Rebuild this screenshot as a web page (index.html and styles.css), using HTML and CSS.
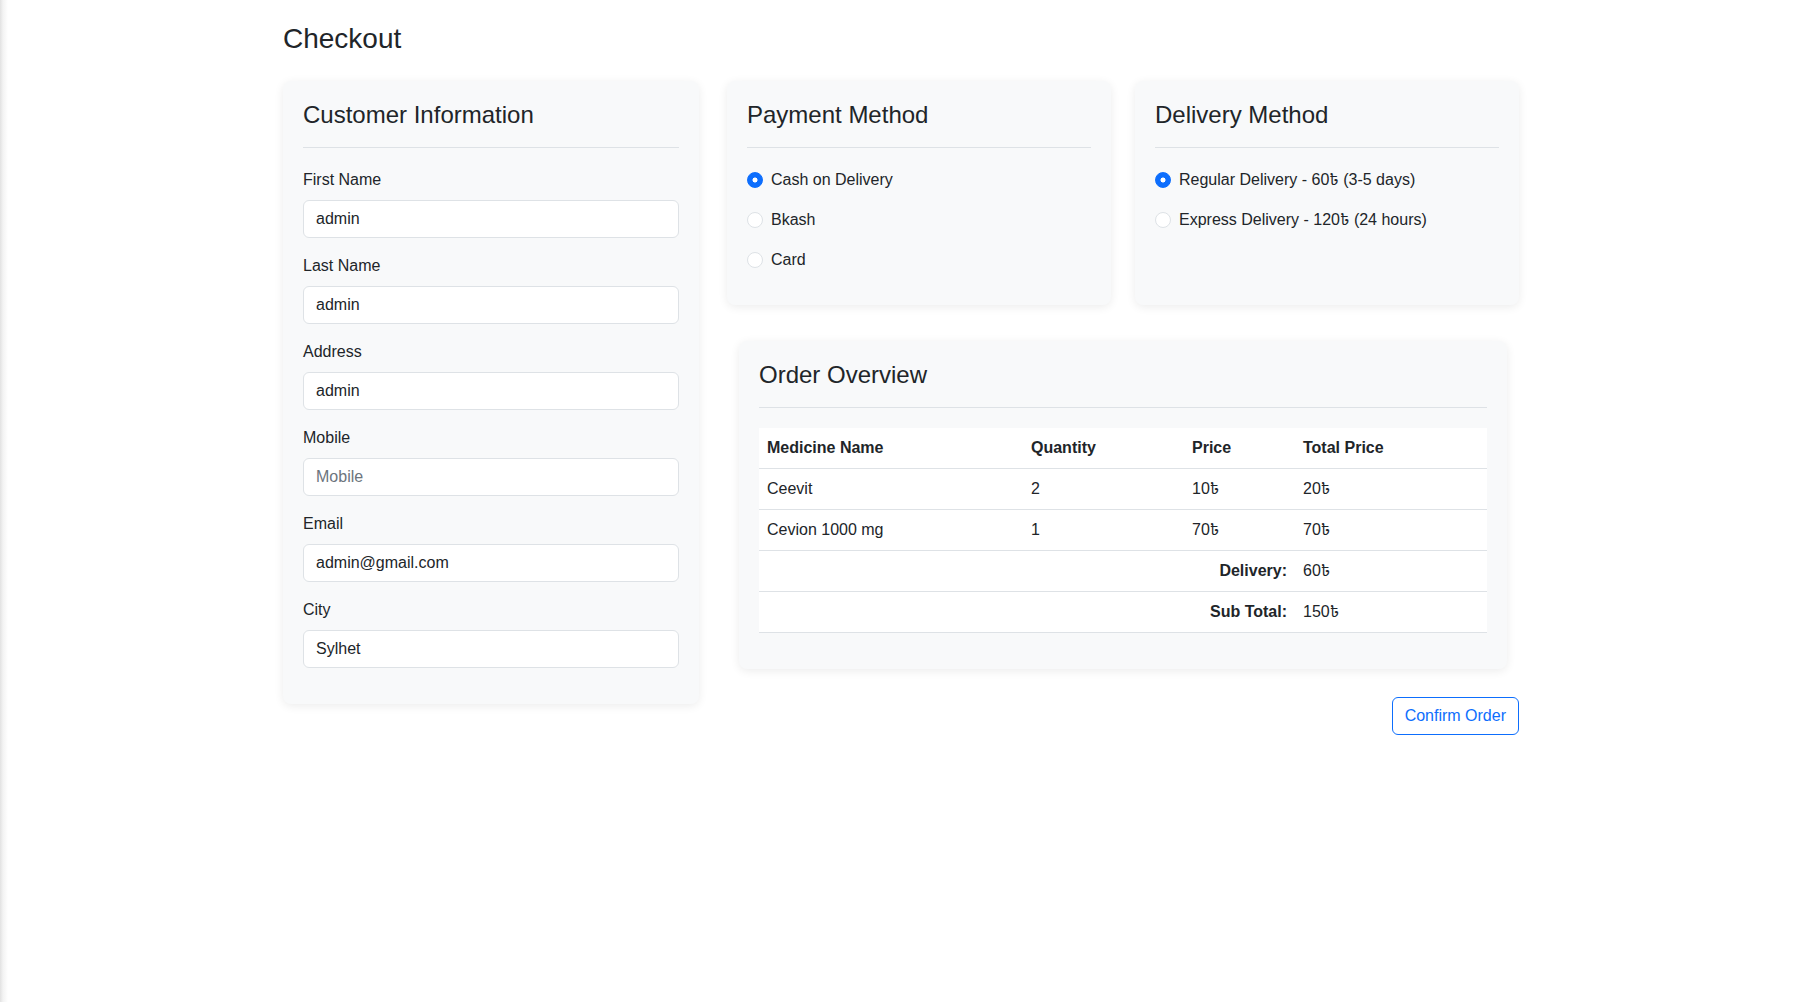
FILE: index.html
```html
<!DOCTYPE html>
<html lang="en">
<head>
<meta charset="utf-8">
<title>Checkout</title>
<link rel="stylesheet" href="styles.css">
</head>
<body>
<div class="page">
  <h3 class="page-title">Checkout</h3>
  <div class="layout">
    <div class="col-customer">
      <div class="card">
        <h4 class="card-title">Customer Information</h4>
        <hr class="divider">
        <div class="field">
          <label class="field-label" for="fn">First Name</label>
          <input class="field-input" id="fn" type="text" value="admin">
        </div>
        <div class="field">
          <label class="field-label" for="ln">Last Name</label>
          <input class="field-input" id="ln" type="text" value="admin">
        </div>
        <div class="field">
          <label class="field-label" for="ad">Address</label>
          <input class="field-input" id="ad" type="text" value="admin">
        </div>
        <div class="field">
          <label class="field-label" for="mo">Mobile</label>
          <input class="field-input" id="mo" type="text" placeholder="Mobile">
        </div>
        <div class="field">
          <label class="field-label" for="em">Email</label>
          <input class="field-input" id="em" type="text" value="admin@gmail.com">
        </div>
        <div class="field">
          <label class="field-label" for="ci">City</label>
          <input class="field-input" id="ci" type="text" value="Sylhet">
        </div>
      </div>
    </div>
    <div class="col-right">
      <div class="methods">
        <div class="card">
          <h4 class="card-title">Payment Method</h4>
          <hr class="divider">
          <div class="options">
            <label class="option"><input class="radio" type="radio" name="pay" checked><span>Cash on Delivery</span></label>
            <label class="option"><input class="radio" type="radio" name="pay"><span>Bkash</span></label>
            <label class="option"><input class="radio" type="radio" name="pay"><span>Card</span></label>
          </div>
        </div>
        <div class="card">
          <h4 class="card-title">Delivery Method</h4>
          <hr class="divider">
          <div class="options">
            <label class="option"><input class="radio" type="radio" name="del" checked><span>Regular Delivery - 60<span class="tk">৳</span> (3-5 days)</span></label>
            <label class="option"><input class="radio" type="radio" name="del"><span>Express Delivery - 120<span class="tk">৳</span> (24 hours)</span></label>
          </div>
        </div>
      </div>
      <div class="card order-card">
        <h4 class="card-title">Order Overview</h4>
        <hr class="divider">
        <table class="order-table">
          <colgroup>
            <col class="c1"><col class="c2"><col class="c3"><col class="c4">
          </colgroup>
          <thead>
            <tr><th>Medicine Name</th><th>Quantity</th><th>Price</th><th>Total Price</th></tr>
          </thead>
          <tbody>
            <tr><td>Ceevit</td><td>2</td><td>10<span class="tk">৳</span></td><td>20<span class="tk">৳</span></td></tr>
            <tr><td>Cevion 1000 mg</td><td>1</td><td>70<span class="tk">৳</span></td><td>70<span class="tk">৳</span></td></tr>
            <tr><th colspan="3" class="right">Delivery:</th><td>60<span class="tk">৳</span></td></tr>
            <tr><th colspan="3" class="right">Sub Total:</th><td>150<span class="tk">৳</span></td></tr>
          </tbody>
        </table>
      </div>
      <div class="actions">
        <button class="btn-confirm" type="button">Confirm Order</button>
      </div>
    </div>
  </div>
</div>
</body>
</html>
```
FILE: styles.css
```css
* { box-sizing: border-box; }
html, body { margin: 0; }
body {
  font-family: "Liberation Sans", Arial, sans-serif;
  font-size: 16px;
  line-height: 1.5;
  color: #212529;
  background: #fff linear-gradient(to right, #e2e2e2 0, #f3f3f3 3px, #fff 8px) no-repeat;
  min-height: 100vh;
}
.page {
  width: 1236px;
  margin-left: 283px;
  padding-top: 22px;
}
.page-title {
  font-size: 28px;
  line-height: 1.2;
  font-weight: 400;
  margin: 0 0 25px;
}
.layout {
  display: flex;
  gap: 28px;
  align-items: flex-start;
}
.col-customer { width: 416px; flex: none; }
.col-right { width: 792px; flex: none; }
.card {
  background: #f8f9fa;
  border-radius: 8px;
  box-shadow: 0 2px 10px rgba(0, 0, 0, 0.08);
  padding: 20px;
}
.card-title {
  font-size: 24px;
  line-height: 1.2;
  font-weight: 400;
  margin: 0;
}
.divider {
  border: 0;
  border-top: 1px solid #dee2e6;
  margin: 17.5px 0 20px;
}
.field { margin-bottom: 16px; }
.field-label { display: block; margin-bottom: 8px; }
.field-input {
  display: block;
  width: 100%;
  height: 38px;
  padding: 6px 12px;
  font: inherit;
  color: #212529;
  background: #fff;
  border: 1px solid #dee2e6;
  border-radius: 6px;
  outline: none;
}
.field-input::placeholder { color: #6c757d; opacity: 1; }
.methods { display: flex; gap: 24px; }
.methods .card { flex: 1; }
.options {
  display: flex;
  flex-direction: column;
  gap: 16px;
  margin-bottom: 13px;
}
.option {
  display: flex;
  align-items: center;
  height: 24px;
}
.radio {
  appearance: none;
  -webkit-appearance: none;
  width: 16px;
  height: 16px;
  margin: 0 8px 0 0;
  flex: none;
  border: 1px solid #dee2e6;
  border-radius: 50%;
  background: #fff;
}
.radio:checked {
  border-color: #0d6efd;
  background: radial-gradient(circle, #fff 0, #fff 2.2px, #0d6efd 2.8px);
}
.tk {
  font-family: "Noto Sans Bengali", "Lohit Bengali", "Noto Sans", "DejaVu Sans", sans-serif;
  line-height: 1;
}
.order-card { margin: 36px 12px 0; }
.order-table {
  width: 100%;
  border-collapse: collapse;
  table-layout: fixed;
  background: #fff;
  margin-bottom: 16px;
}
.order-table .c1 { width: 264px; }
.order-table .c2 { width: 161px; }
.order-table .c3 { width: 111px; }
.order-table .c4 { width: 192px; }
.order-table th,
.order-table td {
  padding: 8px;
  border-bottom: 1px solid #dee2e6;
  text-align: left;
  font-weight: 400;
  line-height: 24px;
}
.order-table th { font-weight: 700; }
.order-table th.right { text-align: right; }
.actions {
  display: flex;
  justify-content: flex-end;
  margin-top: 28px;
}
.btn-confirm {
  font: inherit;
  line-height: 24px;
  padding: 6px 12px;
  color: #0d6efd;
  background: transparent;
  border: 1px solid #0d6efd;
  border-radius: 6px;
}
```
